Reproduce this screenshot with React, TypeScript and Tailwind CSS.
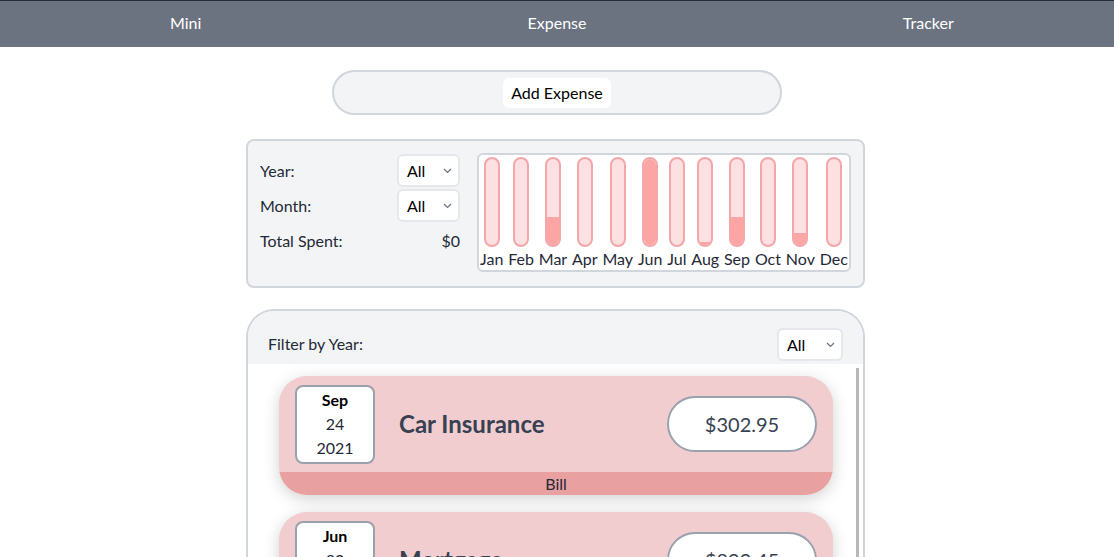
import { ReactNode } from "react";

const months = [
  { m: "Jan", v: 0 },
  { m: "Feb", v: 0 },
  { m: "Mar", v: 32 },
  { m: "Apr", v: 0 },
  { m: "May", v: 0 },
  { m: "Jun", v: 100 },
  { m: "Jul", v: 0 },
  { m: "Aug", v: 3 },
  { m: "Sep", v: 33 },
  { m: "Oct", v: 0 },
  { m: "Nov", v: 14 },
  { m: "Dec", v: 0 },
];

const expenses = [
  { month: "Sep", day: "24", year: "2021", title: "Car Insurance", amount: "$302.95", type: "Bill" },
  { month: "Jun", day: "30", year: "2021", title: "Mortgage", amount: "$899.45", type: "Bill" },
];

function Select({ className = "" }: { className?: string }) {
  return (
    <div
      className={`flex items-center justify-between bg-white border-2 border-gray-200 rounded-md pl-[8px] pr-[6px] h-[33px] ${className}`}
    >
      <span className="text-[16px] text-black">All</span>
      <svg width="9" height="6" viewBox="0 0 9 6" fill="none">
        <path d="M1 1l3.5 3.5L8 1" stroke="#6b7280" strokeWidth="1.2" />
      </svg>
    </div>
  );
}

function Bar({ label, value }: { label: string; value: number }) {
  return (
    <div className="flex flex-col items-center">
      <div className="w-[16px] h-[90px] rounded-full border-2 border-[#f4a6a9] bg-[#fde0e1] overflow-hidden flex flex-col justify-end">
        <div className="w-full bg-[#fca5a5]" style={{ height: `${value}%` }} />
      </div>
      <span className="text-[16px] leading-[20px] mt-[2px] text-[#1f2937]">{label}</span>
    </div>
  );
}

function Row({ children }: { children: ReactNode }) {
  return <div className="flex items-center justify-between h-[35px]">{children}</div>;
}

function ExpenseItem({ e }: { e: (typeof expenses)[number] }) {
  return (
    <div className="rounded-[28px] bg-[#f2cdd0] overflow-hidden shadow-[0_4px_16px_rgba(0,0,0,0.18)]">
      <div className="flex items-center h-[96px] px-4">
        <div className="w-[80px] h-[79px] bg-white border-2 border-gray-400 rounded-lg flex flex-col items-center justify-center leading-[24px]">
          <span className="font-bold text-[16px] text-black">{e.month}</span>
          <span className="text-[16px] text-[#1f2937]">{e.day}</span>
          <span className="text-[16px] text-[#1f2937]">{e.year}</span>
        </div>
        <h2 className="ml-[24px] flex-1 text-[24px] font-bold text-[#374151]">{e.title}</h2>
        <div className="w-[150px] h-[56px] bg-white border-2 border-gray-400 rounded-full flex items-center justify-center text-[20px] text-[#374151]">
          {e.amount}
        </div>
      </div>
      <div className="h-[23px] bg-[#e8a0a0] flex items-center justify-center text-[16px] text-[#1f2937]">
        {e.type}
      </div>
    </div>
  );
}

export default function App() {
  return (
    <div className="min-h-screen bg-white text-[#1f2937]" style={{ fontFamily: "Lato, 'Noto Sans', sans-serif" }}>
      {/* NAV */}
      <nav className="grid grid-cols-3 h-[47px] bg-[#6b7280] border-t border-[#2a2c38] text-white text-[16px]">
        <div className="flex items-center justify-center pb-[2px]">Mini</div>
        <div className="flex items-center justify-center pb-[2px]">Expense</div>
        <div className="flex items-center justify-center pb-[2px]">Tracker</div>
      </nav>

      {/* ADD EXPENSE */}
      <div className="mt-[23px] mx-auto w-[450px] h-[45px] rounded-full bg-gray-100 border-2 border-gray-300 flex items-center justify-center">
        <button className="bg-white rounded-md px-[8px] h-[30px] text-[16px] text-black">Add Expense</button>
      </div>

      {/* FILTER + CHART */}
      <div className="mt-[24px] ml-[246px] w-[619px] h-[149px] bg-gray-100 border-2 border-gray-300 rounded-lg flex gap-[17px] px-[12px] pt-[12px]">
        <div className="w-[200px] text-[16px] text-[#1f2937]">
          <Row>
            <span>Year:</span>
            <Select className="w-[63px]" />
          </Row>
          <Row>
            <span>Month:</span>
            <Select className="w-[63px]" />
          </Row>
          <Row>
            <span>Total Spent:</span>
            <span>$0</span>
          </Row>
        </div>
        <div className="w-[374px] h-[119px] bg-white border-2 border-gray-300 rounded-md flex justify-between pt-[2px] px-[1px] overflow-hidden">
          {months.map((x) => (
            <Bar key={x.m} label={x.m} value={x.v} />
          ))}
        </div>
      </div>

      {/* EXPENSE LIST */}
      <div className="mt-[21px] ml-[246px] w-[619px] border-2 border-b-0 border-gray-300 rounded-t-[28px] overflow-hidden">
        <div className="h-[53px] bg-gray-100 flex items-center justify-between pl-[20px] pr-[20px]">
          <span className="text-[16px] text-[#1f2937] mt-[12px]">Filter by Year:</span>
          <Select className="w-[66px] mt-[14px]" />
        </div>
        <div className="flex bg-white">
          <div className="flex-1 flex flex-col gap-[17px] pl-[31px] pr-[23px] pt-[12px] pb-[20px]">
            {expenses.map((e) => (
              <ExpenseItem key={e.title} e={e} />
            ))}
          </div>
          <div className="w-[3px] mr-[4px] mt-[4px] bg-[#b8b8b8]" />
        </div>
      </div>
    </div>
  );
}
